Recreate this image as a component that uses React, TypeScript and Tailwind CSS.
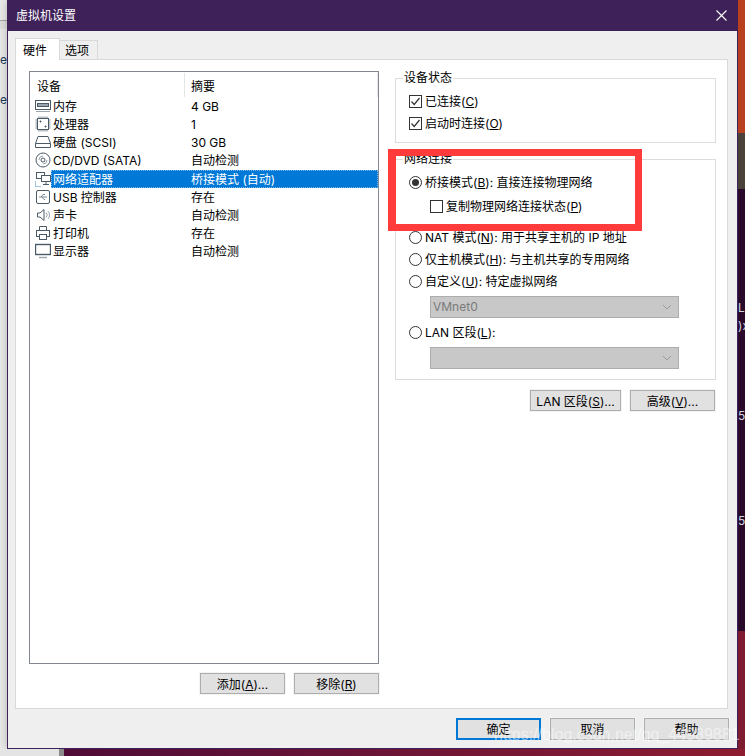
import React from 'react';

const FONT = "font-['Inter','Noto_Sans_CJK_SC',sans-serif]";

const Btn = ({ children, w = 'w-[85px]', h = 'h-[21px]', primary }: { children: React.ReactNode; w?: string; h?: string; primary?: boolean }) => (
  <div
    className={`${w} ${h} flex items-center justify-center bg-[#e1e1e1] text-[12px] text-black ${
      primary ? 'border-2 border-[#0078d7]' : 'border border-[#adadad] outline outline-1 outline-[#f4f4f4]'
    }`}
  >
    <span className="pt-[2px]">{children}</span>
  </div>
);

const Check = ({ checked }: { checked?: boolean }) => (
  <svg width="13" height="13" viewBox="0 0 13 13" className="shrink-0">
    <rect x="0.5" y="0.5" width="12" height="12" fill="#fff" stroke="#333" />
    {checked && <path d="M2.5 6.5 L5.2 9.5 L10.5 3" fill="none" stroke="#333" strokeWidth="1.2" />}
  </svg>
);

const Radio = ({ checked }: { checked?: boolean }) => (
  <svg width="13" height="13" viewBox="0 0 13 13" className="shrink-0">
    <circle cx="6.5" cy="6.5" r="6" fill="#fff" stroke="#333" />
    {checked && <circle cx="6.5" cy="6.5" r="3.5" fill="#333" />}
  </svg>
);

const Select = ({ value }: { value?: string }) => (
  <div className="ml-[34px] w-[249px] h-[22px] flex items-center justify-between bg-[#c8c8c8] border border-[#adadad] pl-[2px] pr-[6px] text-[12px] text-[#7a7a7a]">
    <span>{value}</span>
    <svg width="10" height="6" viewBox="0 0 10 6">
      <path d="M1 1 L5 5 L9 1" fill="none" stroke="#9a9a9a" />
    </svg>
  </div>
);

const ic = { fill: 'none', stroke: '#4c5a66', strokeWidth: 1 };

const icons: Record<string, React.ReactNode> = {
  memory: (
    <g {...ic}>
      <rect x="0.5" y="2.5" width="15" height="9" />
      <rect x="2.5" y="5.5" width="11" height="3" fill="#9aa5ae" />
      <path d="M1 13.5 H15" stroke="#9aa5ae" />
    </g>
  ),
  cpu: (
    <g {...ic}>
      <rect x="2.5" y="2.5" width="11" height="11" />
      <path d="M4 .5V2M6 .5V2M8 .5V2M10 .5V2M12 .5V2M4 14V15.5M6 14V15.5M8 14V15.5M10 14V15.5M12 14V15.5M.5 4H2M.5 6H2M.5 8H2M.5 10H2M.5 12H2M14 4H15.5M14 6H15.5M14 8H15.5M14 10H15.5M14 12H15.5" stroke="#7c8892" />
      <path d="M5 5h1v1H5zM10 10h1v1h-1z" fill="#4c5a66" />
    </g>
  ),
  disk: (
    <g {...ic}>
      <path d="M3 2.5 H13 L15.5 9.5 V13.5 H.5 V9.5 Z" />
      <path d="M.5 9.5 H15.5" />
    </g>
  ),
  cd: (
    <g {...ic}>
      <circle cx="8" cy="8" r="7" />
      <circle cx="8" cy="8" r="2" />
      <path d="M4 8 A4 4 0 0 1 8 4M12 8 A4 4 0 0 1 8 12" stroke="#9aa5ae" />
    </g>
  ),
  net: (
    <g {...ic}>
      <rect x="1.5" y="1.5" width="8" height="6" />
      <rect x="6.5" y="4.5" width="9" height="6" fill="#fff" />
      <path d="M11 11V13M8 13.5H14" />
      <path d="M.5 10.5V15.5H6" stroke="#3f8fd0" strokeDasharray="1 1" />
    </g>
  ),
  usb: (
    <g {...ic}>
      <rect x="1.5" y="1.5" width="13" height="13" rx="1.5" />
      <path d="M4 8 H12M6 8 L8 5.5 H10M7 8 L9 10.5 H10" stroke="#7c8892" />
    </g>
  ),
  sound: (
    <g {...ic}>
      <path d="M2.5 6 H5 L9 2.5 V13.5 L5 10 H2.5 Z" />
      <path d="M11 5.5 A3.5 3.5 0 0 1 11 10.5M13 4 A6 6 0 0 1 13 12" stroke="#9aa5ae" />
    </g>
  ),
  printer: (
    <g {...ic}>
      <path d="M4.5 5.5 V1.5 H11.5 V5.5" />
      <rect x="1.5" y="5.5" width="13" height="6" />
      <rect x="4.5" y="9.5" width="7" height="5" fill="#fff" />
    </g>
  ),
  monitor: (
    <g {...ic}>
      <rect x="0.5" y="1.5" width="15" height="10" strokeWidth="1.4" />
      <path d="M4 14.5 H12" stroke="#9aa5ae" strokeWidth="1.4" />
    </g>
  ),
};

const rows = [
  ['memory', '内存', '4 GB'],
  ['cpu', '处理器', '1'],
  ['disk', '硬盘 (SCSI)', '30 GB'],
  ['cd', 'CD/DVD (SATA)', '自动检测'],
  ['net', '网络适配器', '桥接模式 (自动)'],
  ['usb', 'USB 控制器', '存在'],
  ['sound', '声卡', '自动检测'],
  ['printer', '打印机', '存在'],
  ['monitor', '显示器', '自动检测'],
];

const DeviceList = () => (
  <div className="flex-1 border border-[#828790] bg-white text-[12px] text-black">
    <div className="flex h-[25px]">
      <div className="w-[155px] pl-[7px] pt-[4px] border-r border-[#e5e5e5] flex items-center mt-[1px]">设备</div>
      <div className="flex-1 pl-[6px] pt-[4px] border-r border-[#e5e5e5] flex items-center mt-[1px]">摘要</div>
    </div>
    {rows.map(([icon, name, summary], i) => (
      <div key={name} className="flex h-[18.125px] items-center">
        <svg width="16" height="16" viewBox="0 0 16 16" className="ml-[5px] shrink-0">
          {icons[icon]}
        </svg>
        <div
          className={`flex flex-1 h-full items-center pt-[2px] ${
            i === 4 ? 'bg-[#0078d7] text-white outline-1 outline-dotted -outline-offset-1 outline-[#7fb8e8]' : ''
          }`}
        >
          <span className="w-[140px] pl-[2px] shrink-0 whitespace-nowrap">{name}</span>
          <span className="whitespace-nowrap">{summary}</span>
        </div>
      </div>
    ))}
  </div>
);

const Group = ({ title, className, children }: { title: string; className: string; children: React.ReactNode }) => (
  <div className={`relative border border-[#dcdcdc] ${className}`}>
    <span className="absolute -top-[9px] left-[7px] bg-white px-[1px] text-[12px] leading-[16px]">{title}</span>
    {children}
  </div>
);

const Opt = ({ icon, children, className = '' }: { icon: React.ReactNode; children: React.ReactNode; className?: string }) => (
  <div className={`flex items-center gap-[3px] h-[16px] whitespace-nowrap text-[12px] text-black ${className}`}>
    {icon}
    <span className="pt-[2px]">{children}</span>
  </div>
);

export default function App() {
  return (
    <div className={`w-[745px] h-[756px] overflow-hidden flex flex-col relative ${FONT}`}>
      <div className="flex h-[749px]">
        {/* what shows behind the dialog, left side */}
        <div className="w-[7px] bg-[#ececec] flex flex-col text-[12px] text-[#1a3a5a] leading-[12px] overflow-hidden">
          <div className="h-[9px] mt-[20px] border-t border-[#a8a8a8] bg-[#e0e0e0]" />
          <div className="mt-[25px]">e</div>
          <div className="mt-[28px]">er</div>
        </div>

        <div className="w-[731px] flex flex-col border-x border-b border-[#3e2159] bg-[#efefef] shadow-[0_0_10px_rgba(0,0,0,0.25)]">
          <div className="h-[31px] shrink-0 bg-[#3e2159] flex items-center justify-between pl-[8px] pr-[10px] text-[12px] text-white">
            <span>虚拟机设置</span>
            <svg width="11" height="11" viewBox="0 0 11 11">
              <path d="M.5 .5 L10.5 10.5 M10.5 .5 L.5 10.5" stroke="#fff" strokeWidth="1.1" />
            </svg>
          </div>

          <div className="flex items-end h-[28px] shrink-0 pl-[7px] text-[12px]">
            <div className="w-[45px] h-[22px] bg-white border border-b-0 border-[#d9d9d9] pl-[7px] pt-[2px] flex items-center relative top-[1px] z-10">硬件</div>
            <div className="w-[38px] h-[19px] bg-[#efefef] border border-b-0 border-l-0 border-[#d9d9d9] pl-[5px] pt-[2px] flex items-center">选项</div>
          </div>

          <div className="flex-1 ml-[7px] mr-[9px] flex gap-[16px] bg-white border border-[#d9d9d9] pt-[11px] pb-[14px] pl-[13px] pr-[10px] min-h-0">
            <div className="w-[350px] flex flex-col gap-[9px]">
              <DeviceList />
              <div className="flex justify-end gap-[9px]">
                <Btn>添加(<u>A</u>)...</Btn>
                <Btn>移除(<u>R</u>)</Btn>
              </div>
            </div>

            <div className="w-[321px] pt-[7px]">
              <Group title="设备状态" className="h-[65px] pt-[14px] pl-[13px]">
                <Opt icon={<Check checked />}>已连接(<u>C</u>)</Opt>
                <Opt icon={<Check checked />} className="mt-[6px]">启动时连接(<u>O</u>)</Opt>
              </Group>

              <Group title="网络连接" className="mt-[16px] h-[221px] pt-[14px] pl-[13px]">
                <Opt icon={<Radio checked />}>桥接模式(<u>B</u>): 直接连接物理网络</Opt>
                <Opt icon={<Check />} className="ml-[21px] mt-[8px]">复制物理网络连接状态(<u>P</u>)</Opt>
                <Opt icon={<Radio />} className="mt-[15px]">NAT 模式(<u>N</u>): 用于共享主机的 IP 地址</Opt>
                <Opt icon={<Radio />} className="mt-[6px]">仅主机模式(<u>H</u>): 与主机共享的专用网络</Opt>
                <Opt icon={<Radio />} className="mt-[6px]">自定义(<u>U</u>): 特定虚拟网络</Opt>
                <div className="-ml-[13px] mt-[7px]"><Select value="VMnet0" /></div>
                <Opt icon={<Radio />} className="mt-[6px]">LAN 区段(<u>L</u>):</Opt>
                <div className="-ml-[13px] mt-[7px]"><Select /></div>
              </Group>

              <div className="flex justify-end gap-[9px] mt-[10px] pr-[1px]">
                <Btn w="w-[91px]">LAN 区段(<u>S</u>)...</Btn>
                <Btn>高级(<u>V</u>)...</Btn>
              </div>
            </div>
          </div>

          <div className="h-[39px] shrink-0 flex justify-end gap-[9px] pt-[9px] pr-[8px]">
            <Btn primary h="h-[22px]">确定</Btn>
            <Btn h="h-[22px]">取消</Btn>
            <Btn h="h-[22px]">帮助</Btn>
          </div>
        </div>

        {/* what shows behind the dialog, right side */}
        <div className="flex-1 flex flex-col overflow-hidden text-[12px] leading-[18px] text-[#cfd8e0]">
          <div className="h-[133px] bg-[#b8401f]" />
          <div className="h-[56px] bg-[#4a4238]" />
          <div className="h-[442px] bg-[#2a0a2a] pt-[110px]">
            <div>L9</div>
            <div>)x</div>
            <div className="mt-[72px]">5</div>
            <div className="mt-[87px]">5</div>
          </div>
          <div className="flex-1 bg-[#7e1b30]" />
        </div>
      </div>

      <div className="flex-1 flex">
        <div className="w-[59px] bg-[#e4e4e4]" />
        <div className="w-[5px] bg-[#8c8c8c]" />
        <div className="flex-1 bg-linear-to-r from-[#4f0b36] to-[#8e1c30]" />
      </div>

      {/* red annotation box drawn on the screenshot */}
      <div className="absolute left-[388px] top-[149px] w-[254px] h-[82px] border-y-[7px] border-l-[8px] border-r-[7px] border-[#ff3b3b]" />

      {/* blog watermark */}
      <div className="absolute left-[494px] top-[724px] font-['Liberation_Sans',sans-serif] text-[16px] leading-[22px] whitespace-nowrap text-white/50">
        https://blog.csdn.net/qq_44989881
      </div>
    </div>
  );
}
